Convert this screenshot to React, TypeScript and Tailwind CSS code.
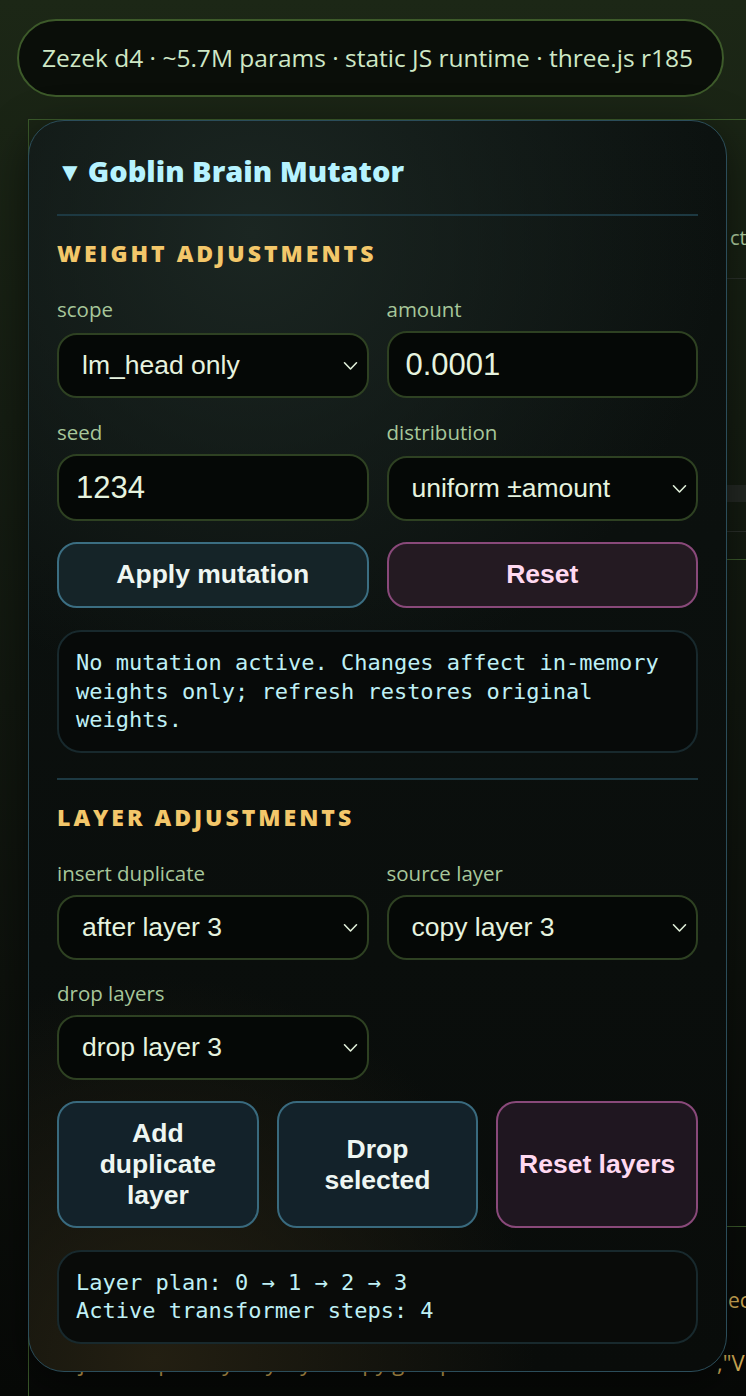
import React from 'react';

const Chevron: React.FC = () => (
  <svg
    className="pointer-events-none absolute right-[11px] top-1/2 -translate-y-1/2"
    width="15"
    height="10"
    viewBox="0 0 15 10"
    fill="none"
  >
    <polyline points="1.5,1.8 7.5,8 13.5,1.8" stroke="#dfeed8" strokeWidth="1.6" strokeLinecap="round" strokeLinejoin="round" />
  </svg>
);

interface SelectFieldProps {
  label: string;
  value: string;
  options: string[];
  height: string;
}

const SelectField: React.FC<SelectFieldProps> = ({ label, value, options, height }) => (
  <div className={`flex flex-col ${height}`}>
    <span className="text-[20.5px] leading-[24px] text-[#a7c79a] font-['Open_Sans',sans-serif]">{label}</span>
    <div className="relative mt-auto">
      <select
        defaultValue={value}
        className="h-[65px] w-full appearance-none rounded-[20px] border-2 border-[#2e4122] bg-[#050806] pl-[23px] pr-[36px] text-[26.5px] text-[#e6f3df] outline-none font-['Liberation_Sans',Arial,sans-serif]"
      >
        {options.map((o) => (
          <option key={o} value={o}>
            {o}
          </option>
        ))}
      </select>
      <Chevron />
    </div>
  </div>
);

interface InputFieldProps {
  label: string;
  value: string;
}

const InputField: React.FC<InputFieldProps> = ({ label, value }) => (
  <div className="flex h-[101px] flex-col">
    <span className="text-[20.5px] leading-[24px] text-[#a7c79a] font-['Open_Sans',sans-serif]">{label}</span>
    <input
      defaultValue={value}
      className="mt-auto h-[67px] w-full rounded-[20px] border-2 border-[#2e4122] bg-[#050806] px-[17px] text-[31px] text-[#e6f3df] outline-none font-['Liberation_Sans',Arial,sans-serif]"
    />
  </div>
);

const SectionHeading: React.FC<{ children: React.ReactNode }> = ({ children }) => (
  <h3 className="mt-[23px] h-[28px] whitespace-nowrap text-[23px] leading-[28px] font-extrabold tracking-[0.13em] text-[#f3c76a] font-['Open_Sans',sans-serif]">
    {children}
  </h3>
);

export default function App() {
  return (
    <div className="relative h-[1396px] w-[746px] overflow-hidden bg-[linear-gradient(180deg,#1c2716_0%,#151d12_30%,#0d110c_70%,#070907_100%)]">
      {/* status pill */}
      <div className="px-[17px] pt-[19px]">
        <div className="flex h-[78px] w-[707px] items-center whitespace-nowrap rounded-full border-2 border-[#3d5a2a] bg-[#0a0e09] pl-[23px] text-[24.5px] text-[#cfe8c6] font-['Open_Sans',sans-serif]">
          Zezek d4 · ~5.7M params · static JS runtime · three.js r185
        </div>
      </div>

      {/* page content behind the mutator */}
      <div className="ml-[28px] mt-[22px] w-[900px] border-l border-t border-[#3b5a2b] pb-[40px]">
        <div className="h-[106px]" />
        <p className="pl-[701px] text-[20px] leading-[24px] text-[#b5d4a6] font-['Open_Sans',sans-serif]">ct</p>
        <div className="mt-[28px] border-t border-[#2a302a]" />
        <div className="mt-[206px] h-[17px] bg-[#232823]" />
        <div className="mt-[29px] border-t border-[#2a2f2a]" />
        <div className="mt-[27px] border-t border-[#3b5a2b]" />
        <div className="mt-[666px] border-t border-[#3b5a2b]" />
        <p className="mt-[61px] pl-[699px] text-[21px] leading-[24px] text-[#d9b25a] font-['Open_Sans',sans-serif]">ec</p>
        <div className="mt-[38px] flex whitespace-nowrap pl-[50px] text-[22px] leading-[24px] text-[#d9b25a] font-['Open_Sans',sans-serif]">
          <span className="w-[638px] shrink-0">just keep every tidy layer copy grouped</span>
          <span>,"V</span>
        </div>
      </div>

      {/* mutator panel */}
      <section className="absolute left-[28px] top-[120px] w-[699px] rounded-[36px] border border-[#2b4d5a] bg-[radial-gradient(circle_at_32%_9%,#1b2622_0%,transparent_38%),radial-gradient(circle_at_18%_99%,#231f12_0%,transparent_28%),linear-gradient(180deg,#0c1210,#090c0a)] px-[28px] pb-[27px] pt-[28px] shadow-[0_12px_40px_rgba(0,0,0,0.5)]">
        <h2 className="flex h-[44px] items-center whitespace-nowrap text-[29px] font-extrabold text-[#b6f3ff] font-['Open_Sans',sans-serif]">
          <span className="mr-[5px] text-[26px]">▼</span>
          Goblin Brain Mutator
        </h2>
        <div className="mt-[21px] h-[2px] bg-[#1d3942]" />

        <SectionHeading>WEIGHT ADJUSTMENTS</SectionHeading>
        <div className="mt-[30px] grid grid-cols-2 gap-x-[18px] gap-y-[22px]">
          <SelectField label="scope" value="lm_head only" options={['lm_head only', 'all layers']} height="h-[101px]" />
          <InputField label="amount" value="0.0001" />
          <InputField label="seed" value="1234" />
          <SelectField label="distribution" value="uniform ±amount" options={['uniform ±amount', 'gaussian']} height="h-[101px]" />
        </div>

        <div className="mt-[21px] grid grid-cols-2 gap-x-[18px]">
          <button className="h-[66px] rounded-[20px] border-2 border-[#3b6e82] bg-[#152428] text-[26.5px] font-bold text-[#eef6f2] font-['Liberation_Sans',Arial,sans-serif]">
            Apply mutation
          </button>
          <button className="h-[66px] rounded-[20px] border-2 border-[#89497a] bg-[#241a22] text-[26.5px] font-bold text-[#ffd9f1] font-['Liberation_Sans',Arial,sans-serif]">
            Reset
          </button>
        </div>

        <div className="mt-[22px] h-[123px] rounded-[24px] border-2 border-[#18292d] bg-[#070a09] px-[17px] pt-[17px] text-[22px] leading-[28.5px] text-[#bff0f5] font-['DejaVu_Sans_Mono',monospace]">
          No mutation active. Changes affect in-memory weights only; refresh restores original weights.
        </div>

        <div className="mt-[25px] h-[2px] bg-[#1d3942]" />

        <SectionHeading>LAYER ADJUSTMENTS</SectionHeading>
        <div className="mt-[30px] grid grid-cols-2 gap-x-[18px] gap-y-[21px]">
          <SelectField label="insert duplicate" value="after layer 3" options={['after layer 3']} height="h-[99px]" />
          <SelectField label="source layer" value="copy layer 3" options={['copy layer 3']} height="h-[99px]" />
          <SelectField label="drop layers" value="drop layer 3" options={['drop layer 3']} height="h-[99px]" />
        </div>

        <div className="mt-[21px] grid grid-cols-3 gap-x-[18px]">
          <button className="h-[127px] rounded-[20px] border-2 border-[#396a7e] bg-[#13222a] px-[20px] text-[26.5px] font-bold leading-[31px] text-[#eef6f2] font-['Liberation_Sans',Arial,sans-serif]">
            Add duplicate layer
          </button>
          <button className="h-[127px] rounded-[20px] border-2 border-[#396a7e] bg-[#13222a] px-[20px] text-[26.5px] font-bold leading-[31px] text-[#eef6f2] font-['Liberation_Sans',Arial,sans-serif]">
            Drop selected
          </button>
          <button className="h-[127px] rounded-[20px] border-2 border-[#89497a] bg-[#1f1620] px-[20px] text-[26.5px] font-bold leading-[31px] text-[#ffd9f1] font-['Liberation_Sans',Arial,sans-serif]">
            Reset layers
          </button>
        </div>

        <div className="mt-[22px] h-[94px] rounded-[24px] border-2 border-[#18292d] bg-[#090b09] px-[17px] pt-[17px] text-[22px] leading-[28px] text-[#bff0f5] font-['DejaVu_Sans_Mono',monospace]">
          <div>Layer plan: 0 → 1 → 2 → 3</div>
          <div>Active transformer steps: 4</div>
        </div>
      </section>
    </div>
  );
}
